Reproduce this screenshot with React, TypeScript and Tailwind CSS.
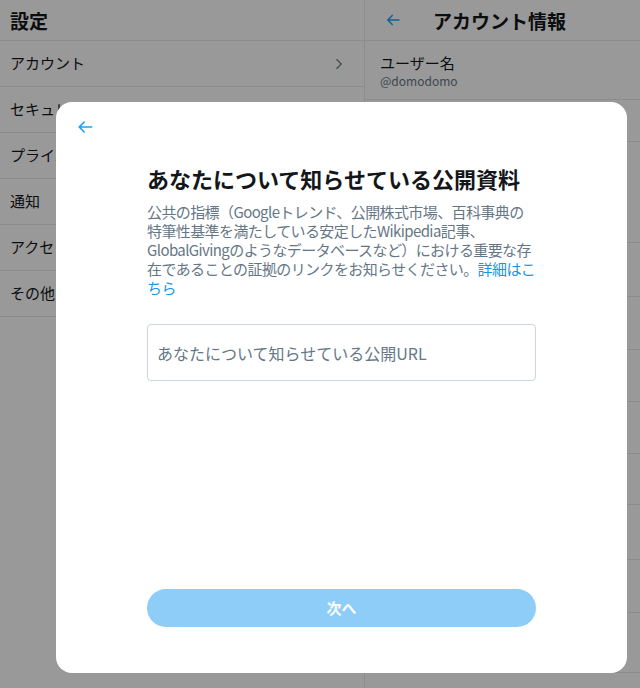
import { ChevronRight } from "lucide-react";

const LEFT_ITEMS = [
  "アカウント",
  "セキュリティとアカウントアクセス",
  "プライバシーと安全",
  "通知",
  "アクセシビリティ、表示、言語",
  "その他のリソース",
];

// 右カラムの行の高さ（モーダルの下に隠れる部分）
const RIGHT_ROWS = [42, 101, 54, 53, 52, 52, 51, 55, 53, 60];

function BackArrow({ className }: { className?: string }) {
  return (
    <svg viewBox="0 0 24 24" className={className} fill="currentColor">
      <path d="M20 11H7.414l4.293-4.293c.39-.39.39-1.023 0-1.414s-1.023-.39-1.414 0l-6 6c-.39.39-.39 1.023 0 1.414l6 6c.195.195.45.293.707.293s.512-.098.707-.293c.39-.39.39-1.023 0-1.414L7.414 13H20c.553 0 1-.447 1-1s-.447-1-1-1z" />
    </svg>
  );
}

export default function App() {
  return (
    <div className="relative w-[640px] h-[688px] overflow-hidden bg-white font-['Noto_Sans_CJK_JP',sans-serif] text-[#14171a]">
      {/* 背景の設定画面 */}
      <div className="flex h-full">
        <div className="w-[365px] shrink-0 border-r border-[#e6ecf0] flex flex-col">
          <div className="h-[41px] border-b border-[#e6ecf0] flex items-center px-[10px]">
            <h2 className="text-[19px] font-bold leading-none">設定</h2>
          </div>
          {LEFT_ITEMS.map((item, i) => (
            <div
              key={item}
              className="h-[46px] border-b border-[#e6ecf0] flex items-center justify-between pl-[10px] pr-[16px]"
            >
              <span className="text-[15px]">{item}</span>
              {i === 0 && <ChevronRight className="w-[18px] h-[18px] text-[#657786]" strokeWidth={1.5} />}
            </div>
          ))}
        </div>

        <div className="flex-1 flex flex-col">
          <div className="h-[41px] border-b border-[#e6ecf0] flex items-center pl-[19px] gap-[31px]">
            <BackArrow className="w-[18px] h-[18px] text-[#1da1f2]" />
            <h2 className="text-[19px] font-bold leading-none">アカウント情報</h2>
          </div>
          <div className="h-[59px] border-b border-[#e6ecf0] flex flex-col justify-center pl-[15px]">
            <span className="text-[15px] leading-[20px]">ユーザー名</span>
            <span className="text-[12px] leading-[15px] text-[#657786]">@domodomo</span>
          </div>
          {RIGHT_ROWS.map((h, i) => (
            <div key={i} className="border-b border-[#e6ecf0]" style={{ height: h }} />
          ))}
        </div>
      </div>

      {/* オーバーレイとモーダル */}
      <div className="absolute inset-0 bg-black/40">
        <div className="absolute left-[56px] top-[102px] w-[571px] h-[571px] rounded-2xl bg-white flex flex-col">
          <div className="h-[50px] flex items-center pl-[19px]">
            <BackArrow className="w-[20px] h-[20px] text-[#1da1f2]" />
          </div>

          <div className="w-[389px] mx-auto flex-1 flex flex-col">
            <h1 className="mt-[12px] text-[22px] leading-[28px] font-bold text-[#14171a]">
              あなたについて知らせている公開資料
            </h1>
            <p className="mt-[10px] text-[15px] leading-[19px] tracking-[-0.6px] text-[#657786] whitespace-nowrap">
              公共の指標（Googleトレンド、公開株式市場、百科事典の
              <br />
              特筆性基準を満たしている安定したWikipedia記事、
              <br />
              GlobalGivingのようなデータベースなど）における重要な存
              <br />
              在であることの証拠のリンクをお知らせください。
              <span className="text-[#1b95e0]">詳細はこ</span>
              <br />
              <span className="text-[#1b95e0]">ちら</span>
            </p>

            <div className="mt-[27px] h-[57px] rounded-[4px] border border-[#ccd6dd] flex items-center px-[9px]">
              <span className="text-[16px] text-[#657786]">あなたについて知らせている公開URL</span>
            </div>

            <button className="mt-auto mb-[46px] h-[38px] w-full rounded-full bg-[#8ecdf8] text-white text-[15px] font-bold">
              次へ
            </button>
          </div>
        </div>
      </div>
    </div>
  );
}
